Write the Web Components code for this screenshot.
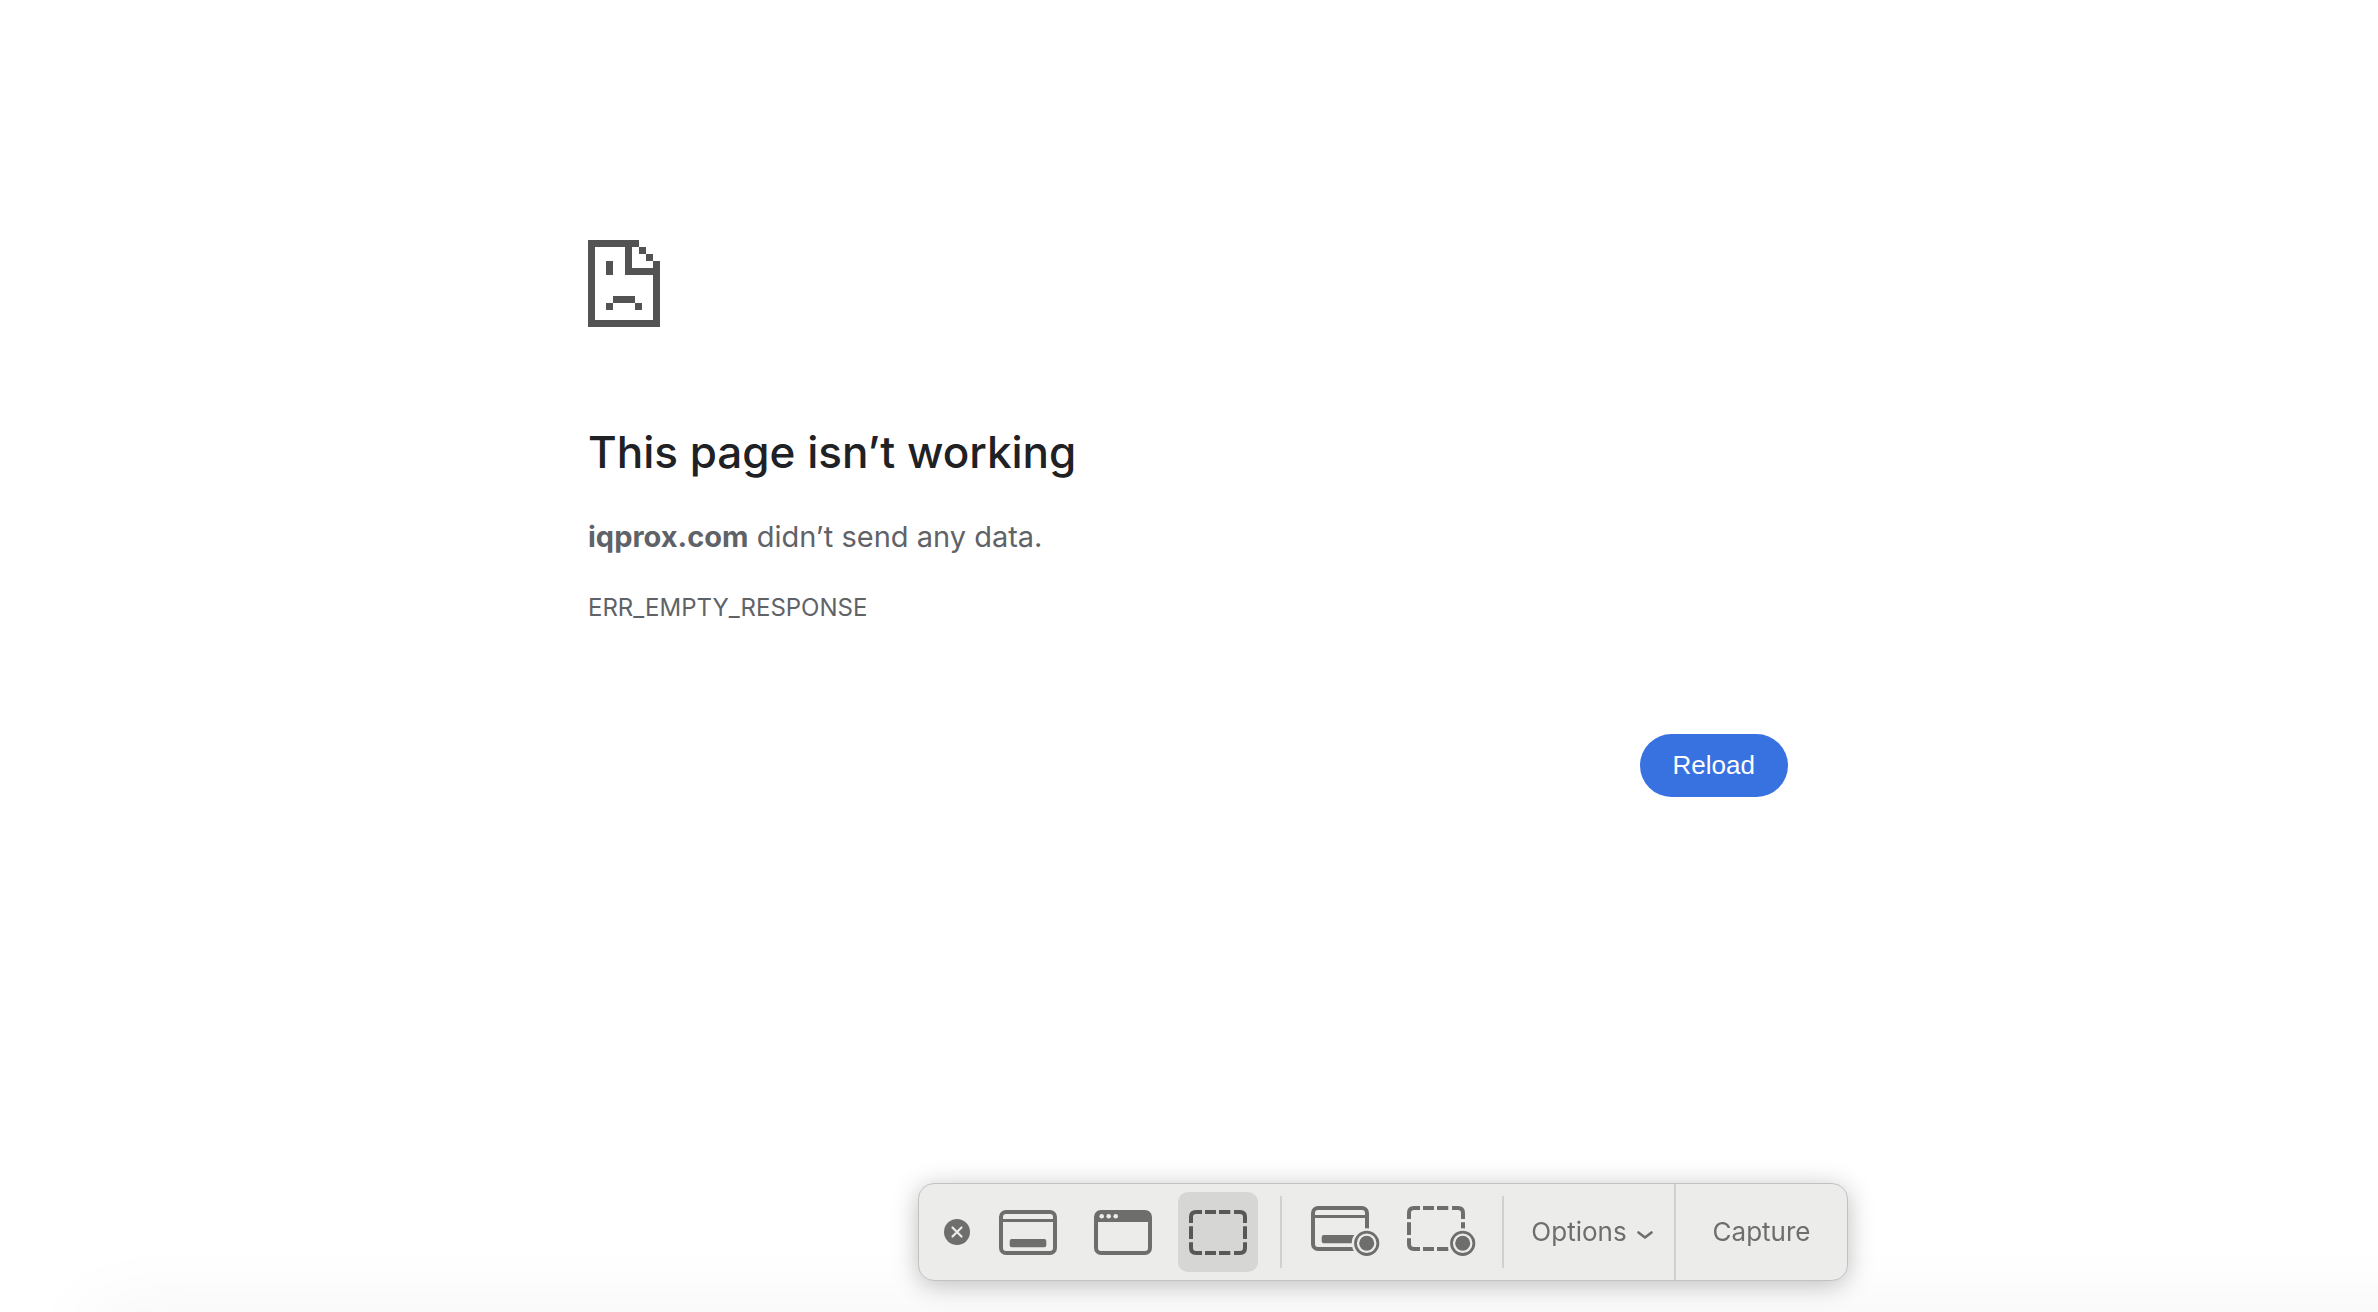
<!DOCTYPE html>
<html lang="en">
<head>
<meta charset="utf-8">
<title>iqprox.com</title>
<style>
  body {
    margin: 0;
    padding-right: 2px;
    background: #fff;
    font-family: Inter, "Liberation Sans", sans-serif;
    overflow: hidden;
  }
</style>
</head>
<body>
<net-error code="ERR_EMPTY_RESPONSE">
  <span slot="title">This page isn’t working</span>
  <strong slot="host">iqprox.com</strong>
  <span slot="reason">didn’t send any data.</span>
</net-error>
<dock-shadow></dock-shadow>
<capture-bar></capture-bar>

<script>
class NetError extends HTMLElement {
  constructor() {
    super();
    this.shadow = this.attachShadow({ mode: 'open' });
  }

  connectedCallback() {
    this.render();
  }

  render() {
    this.shadow.innerHTML = `
      <style>
        :host {
          display: block;
          max-width: 1200px;
          margin: 0 auto;
          padding-top: 240px;
          color: #5f6368;
        }
        svg {
          display: block;
          width: 72px;
          height: 87px;
        }
        h1 {
          margin: 96px 0 0;
          color: #202124;
          font-size: 44px;
          font-weight: 500;
          line-height: 58px;
        }
        p {
          margin: 32px 0 0;
          font-size: 29px;
          line-height: 48px;
        }
        .code {
          margin-top: 28px;
          font-size: 24px;
          line-height: 38px;
        }
        .buttons {
          display: flex;
          justify-content: flex-end;
          margin-top: 107px;
        }
        button {
          padding: 0 33px;
          border: 0;
          border-radius: 32px;
          background: #3871e0;
          color: #fff;
          font: 26px/63px "Liberation Sans", Arial, sans-serif;
          cursor: pointer;
        }
      </style>
      <svg viewBox="0 0 72 87" fill="#535353" shape-rendering="crispEdges" aria-hidden="true">
        <path d="M0 0H51V7H44V28H65V21H72V87H0ZM7 7V80H65V35H37V7Z" fill-rule="evenodd"/>
        <path d="M51 7h7v7h-7zM58 14h7v7h-7zM18 21h7v14h-7zM25 56h22v7h-22zM18 63h7v7h-7zM47 63h7v7h-7z"/>
      </svg>
      <h1><slot name="title"></slot></h1>
      <p><slot name="host"></slot> <slot name="reason"></slot></p>
      <p class="code">${this.getAttribute('code')}</p>
      <div class="buttons"><button type="button">Reload</button></div>
    `;
    this.shadow.querySelector('button').addEventListener('click', () => location.reload());
  }
}

// Soft shade along the bottom edge of the screen
class DockShadow extends HTMLElement {
  constructor() {
    super();
    this.attachShadow({ mode: 'open' }).innerHTML = `
      <style>
        :host {
          position: fixed;
          top: 100%;
          left: 90px;
          right: -90px;
          height: 60px;
          box-shadow: 0 0 80px rgba(0, 0, 0, .05);
          pointer-events: none;
        }
      </style>
    `;
  }
}

const RECORD = `
  <circle cx="66.7" cy="51.3" r="15" fill="#ececea"/>
  <circle cx="66.7" cy="51.3" r="11.2" fill="none" stroke="currentColor" stroke-width="2.8"/>
  <circle cx="66.7" cy="51.3" r="7.5"/>`;

const DASHES = `
  <path fill="none" stroke="currentColor" stroke-width="4" d="M13 31V25Q13 20 18 20H24
    M27 20H38M41 20H52.3M56 20H62Q67 20 67 25V31M67 34.3V47M67 50.3V56Q67 61 62 61H56
    M52.3 61H41M38 61H27M24 61H18Q13 61 13 56V50.3M13 47V34.3"/>`;

const SCREEN = `
  <rect x="13" y="20" width="54" height="41" rx="5" fill="none" stroke="currentColor" stroke-width="4"/>
  <rect x="13" y="27" width="54" height="3"/>
  <rect x="21.7" y="47" width="36.6" height="8.2" rx="2"/>`;

const ICONS = {
  screen: SCREEN,
  window: `
    <rect x="13" y="20" width="54" height="41" rx="5" fill="none" stroke="currentColor" stroke-width="4"/>
    <path d="M12 30V24Q12 19 17 19H63Q68 19 68 24V30Z"/>
    <g fill="#ececea">
      <circle cx="18.7" cy="24.3" r="2.3"/><circle cx="25.7" cy="24.3" r="2.3"/><circle cx="32.7" cy="24.3" r="2.3"/>
    </g>`,
  selection: DASHES,
  'record-screen': `<g transform="translate(0 -4)">${SCREEN}</g>${RECORD}`,
  'record-selection': `<g transform="translate(0 -4)">${DASHES}</g>${RECORD}`
};

class CaptureTool extends HTMLElement {
  constructor() {
    super();
    this.shadow = this.attachShadow({ mode: 'open' });
  }

  connectedCallback() {
    const pressed = this.hasAttribute('selected');
    this.shadow.innerHTML = `
      <style>
        :host { display: block; }
        button {
          display: block;
          padding: 0;
          border: 0;
          border-radius: 10px;
          background: none;
          color: #6e6e6c;
        }
        button[aria-pressed="true"] {
          background: #d6d6d4;
          color: #585856;
        }
        svg {
          display: block;
          width: 80px;
          height: 80px;
        }
      </style>
      <button type="button" aria-label="${this.getAttribute('label')}" aria-pressed="${pressed}">
        <svg viewBox="0 0 80 80" fill="currentColor">${ICONS[this.getAttribute('icon')]}</svg>
      </button>
    `;
  }
}

class CaptureBar extends HTMLElement {
  constructor() {
    super();
    this.shadow = this.attachShadow({ mode: 'open' });
  }

  connectedCallback() {
    this.shadow.innerHTML = `
      <style>
        :host {
          position: fixed;
          left: calc(50% + 194px);
          bottom: 31px;
          transform: translateX(-50%);
          display: flex;
          align-items: center;
          box-sizing: border-box;
          height: 98px;
          border: 1px solid #c2c2c1;
          border-radius: 16px;
          background: #ececea;
          box-shadow: 0 4px 26px rgba(0, 0, 0, .26);
          color: #6e6e6c;
        }
        .group {
          display: flex;
          align-items: center;
          gap: 15px;
          padding: 0 22px 0 18px;
        }
        .record {
          gap: 16px;
          padding-right: 26px;
        }
        button {
          box-sizing: border-box;
          padding: 0;
          border: 0;
          background: none;
          color: inherit;
          font: 26px/32px Inter, "Liberation Sans", sans-serif;
        }
        svg { display: block; }
        .close { margin-left: 25px; }
        .line {
          width: 2px;
          height: 72px;
          background: #d0d0ce;
        }
        .full { height: 100%; }
        .options {
          display: flex;
          align-items: center;
          justify-content: center;
          gap: 10px;
          width: 170px;
          padding-left: 6px;
        }
        .options svg { margin-top: 2px; }
        .capture { width: 171px; }
      </style>
      <button type="button" class="close" aria-label="Close">
        <svg width="26" height="26" viewBox="0 0 26 26">
          <circle cx="13" cy="13" r="13" fill="#6e6e6c"/>
          <path d="M8.5 8.5l9 9M17.5 8.5l-9 9" stroke="#ececea" stroke-width="2.2" stroke-linecap="round"/>
        </svg>
      </button>
      <div class="group">
        <capture-tool icon="screen" label="Capture Entire Screen"></capture-tool>
        <capture-tool icon="window" label="Capture Selected Window"></capture-tool>
        <capture-tool icon="selection" label="Capture Selected Portion" selected></capture-tool>
      </div>
      <div class="line"></div>
      <div class="group record">
        <capture-tool icon="record-screen" label="Record Entire Screen"></capture-tool>
        <capture-tool icon="record-selection" label="Record Selected Portion"></capture-tool>
      </div>
      <div class="line"></div>
      <button type="button" class="options">
        Options
        <svg width="16" height="16" viewBox="0 0 16 16" fill="none" stroke="currentColor" stroke-width="2.6" stroke-linecap="round" stroke-linejoin="round" aria-hidden="true">
          <path d="M1.5 7.5L8 12.5L14.5 7.5"/>
        </svg>
      </button>
      <div class="line full"></div>
      <button type="button" class="capture">Capture</button>
    `;
  }
}

customElements.define('net-error', NetError);
customElements.define('dock-shadow', DockShadow);
customElements.define('capture-tool', CaptureTool);
customElements.define('capture-bar', CaptureBar);
</script>
</body>
</html>
